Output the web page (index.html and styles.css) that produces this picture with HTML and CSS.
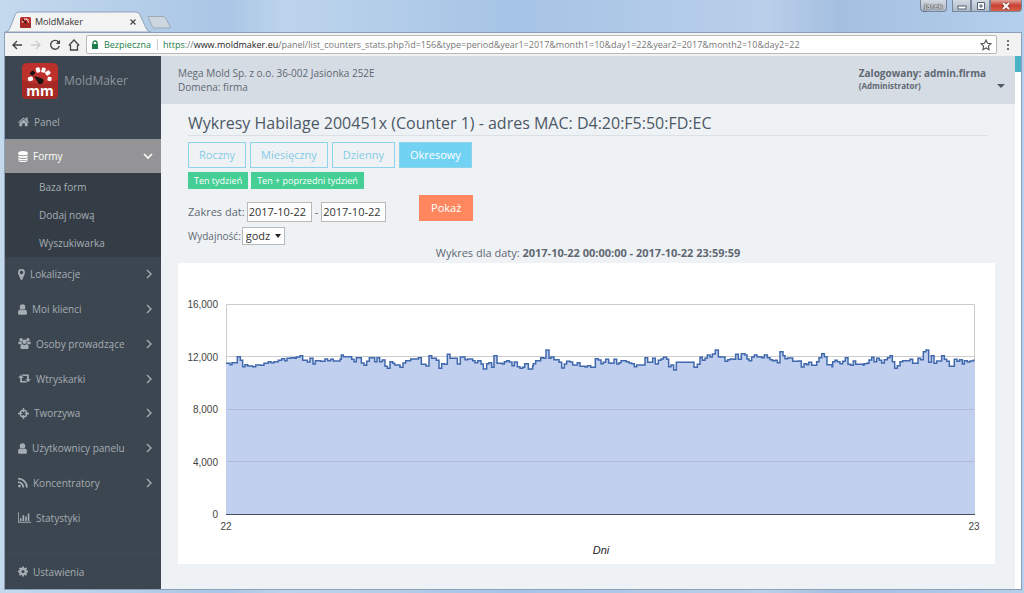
FILE: index.html
```html
<!DOCTYPE html>
<html lang="pl">
<head>
<meta charset="utf-8">
<title>MoldMaker</title>
<link rel="stylesheet" href="styles.css">
</head>
<body>
<svg class="sprite" aria-hidden="true">
  <symbol id="logo" viewBox="0 0 36 36">
    <rect width="36" height="36" rx="5" fill="#bd302b"/>
    <path d="M0 17Q18 24 36 17V31a5 5 0 0 1-5 5H5a5 5 0 0 1-5-5z" fill="#a72925"/>
    <g fill="#fff"><rect x="6" y="14" width="5" height="4" rx="1" transform="rotate(-15 8 16)"/><rect x="14" y="4.500" width="4" height="5" rx="1" transform="rotate(-15 16 7)"/><rect x="19.500" y="4.500" width="4" height="5" rx="1" transform="rotate(15 21 7)"/><rect x="24" y="8" width="5" height="4" rx="1" transform="rotate(-35 26 11)"/><rect x="25.500" y="14" width="4" height="4" rx="1" transform="rotate(10 28 16)"/></g>
    <rect x="8" y="8.500" width="4.500" height="4" rx="1" fill="#181414" transform="rotate(-50 10 10)"/>
    <path d="M12 13l7 2q3 1 2.500 4-2 3-5 1.500z" fill="#181414"/>
  </symbol>
  <symbol id="home" viewBox="0 0 16 14"><path d="M8 1L0 8l1 1 7-6 7 6 1-1-2-2V1h-3v3zM8 4L2 9v5h4v-4h4v4h4V9z"/></symbol>
  <symbol id="database" viewBox="0 0 14 16"><path d="M0 3c0-4 14-4 14 0v1c0 3-14 3-14 0zM0 6c3 2 11 2 14 0v2c0 3-14 3-14 0zM0 10c3 2 11 2 14 0v2c-1 2-13 2-14 0zM0 13.500c3 1.500 11 1.500 14 0 0 3.500-14 3.500-14 0z"/></symbol>
  <symbol id="pin" viewBox="0 0 10 16"><path fill-rule="evenodd" d="M5 0a5 5 0 0 1 5 5c0 2-1 3-1 4l-3 6.500q-1 1-2 0L1 9C1 8 0 7 0 5a5 5 0 0 1 5-5zm0 2.500a2.500 2.500 0 1 0 0 5 2.500 2.500 0 0 0 0-5z"/></symbol>
  <symbol id="user" viewBox="0 0 12 14"><circle cx="6" cy="3.700" r="3.700"/><path d="M3 7q3 2 6 0 3 0 3 5 0 2-2 2H2q-2 0-2-2 0-5 3-5z"/></symbol>
  <symbol id="users" viewBox="0 0 18 16"><circle cx="4" cy="2.500" r="2.500"/><circle cx="14" cy="2.500" r="2.500"/><circle cx="9" cy="5.500" r="3.300"/><path d="M1 5q2 1 4 0-1 3 1 4h5H1Q0 9 0 8 0 5 1 5zM17 5q-2 1-4 0 1 3-1 4h5q1 0 1-1 0-3-1-3zM6 9q3 2 6 0 3 0 3 5 0 2-2 2H5q-2 0-2-2 0-5 3-5z"/></symbol>
  <symbol id="retweet" viewBox="0 0 18 12"><path d="M4 1l4 4H5.500v4.500H11l2 2H3V5H0zM5 .5h10V7h3l-4 4-4-4h2.500V2.500H7z"/></symbol>
  <symbol id="target" viewBox="0 0 16 16"><path fill-rule="evenodd" d="M7 0h2v2.100A6 6 0 0 1 13.900 7H16v2h-2.100A6 6 0 0 1 9 13.900V16H7v-2.100A6 6 0 0 1 2.100 9H0V7h2.100A6 6 0 0 1 7 2.100zm0 4.200A4 4 0 0 0 4.200 7H6v2H4.200A4 4 0 0 0 7 11.800V10h2v1.800A4 4 0 0 0 11.800 9H10V7h1.800A4 4 0 0 0 9 4.200V6H7z"/></symbol>
  <symbol id="rss" viewBox="0 0 14 14"><circle cx="2" cy="12" r="2"/><path d="M0 6.500a7.500 7.500 0 0 1 7.500 7.500M0 1.500a12.500 12.500 0 0 1 12.500 12.500" fill="none" stroke="currentColor" stroke-width="2.500"/></symbol>
  <symbol id="chart" viewBox="0 0 20 16"><path d="M0 0h1.300v14.500H20V16H0zM3 9h2.500v4.500H3zM7 4.500h2.500v9H7zM11 6.500h2.500v7H11zM15 2h2.500v11.500H15z"/></symbol>
  <symbol id="cog" viewBox="0 0 16 16"><path d="M8 0v16M0 8h16M2.300 2.300l11.400 11.400M13.700 2.300L2.300 13.700" stroke="currentColor" stroke-width="3"/><circle cx="8" cy="8" r="4.300" fill="none" stroke="currentColor" stroke-width="3.500"/><circle cx="8" cy="8" r="2.400" fill="#3c4650"/></symbol>
  <symbol id="right" viewBox="0 0 6 10"><path d="M1 1l4 4-4 4" fill="none" stroke="currentColor" stroke-width="1.400"/></symbol>
  <symbol id="down" viewBox="0 0 10 6"><path d="M1 1l4 4 4-4" fill="none" stroke="currentColor" stroke-width="1.600"/></symbol>
</svg>

<header class="titlebar">
  <svg class="tab-shape" viewBox="0 0 170 21" aria-hidden="true">
    <path d="M0 21Q3 21 5 17L10 4Q11 1 14 1H131Q134 1 135 4L141 17Q143 21 146 21z" fill="#f3f3f4" stroke="#8fa3bb"/>
    <path d="M143 5.500h15q2 0 3 2l4 8q1 1.500-1 1.500h-14q-2 0-3-2z" fill="#cdd5de" stroke="#9caab9"/>
  </svg>
  <div class="tab"><svg class="favicon"><use href="#logo"/></svg><span>MoldMaker</span><button class="tab-close" aria-label="Zamknij kartę"><svg viewBox="0 0 6 6"><path d="M.5.5l5 5m0-5l-5 5" stroke="#444" stroke-width="1.100"/></svg></button></div>
  <div class="window-controls">
    <button class="profile">Jarek</button>
    <button class="wc" aria-label="Minimalizuj"><svg viewBox="0 0 12 8"><rect x="2" y="4" width="8" height="3" fill="#fff" stroke="#566275"/></svg></button><button class="wc" aria-label="Maksymalizuj"><svg viewBox="0 0 12 8"><path d="M2.500.5h7v7h-7zM5 3h2v2H5z" fill="#fff" stroke="#566275"/></svg></button><button class="wc wc-close" aria-label="Zamknij"><svg viewBox="0 0 12 8"><path d="M3 1l6 6m0-6L3 7" stroke="#70302a" stroke-width="3"/><path d="M3 1l6 6m0-6L3 7" stroke="#fff" stroke-width="1.800"/></svg></button>
  </div>
</header>

<div class="window">
  <div class="toolbar">
    <button class="tool" aria-label="Wstecz"><svg viewBox="0 0 12 12"><path d="M11 6H2m4-4L2 6l4 4" fill="none" stroke="#444" stroke-width="1.400"/></svg></button>
    <button class="tool" aria-label="Dalej" disabled><svg viewBox="0 0 12 12"><path d="M1 6h9M6 2l4 4-4 4" fill="none" stroke="#ccc" stroke-width="1.400"/></svg></button>
    <button class="tool" aria-label="Odśwież"><svg viewBox="0 0 12 12"><path d="M9.500 3A4.400 4.400 0 1 0 10.300 7" fill="none" stroke="#444" stroke-width="1.400"/><path d="M11 .8V5H6.800z" fill="#444"/></svg></button>
    <button class="tool" aria-label="Strona główna"><svg viewBox="0 0 12 12"><path d="M.8 6.500L6 1l5.200 5.500M2.500 6v5h7V6" fill="none" stroke="#444" stroke-width="1.300"/></svg></button>
    <div class="omnibox">
      <svg class="lock" viewBox="0 0 8 10"><path d="M2 5V3a2 2 0 0 1 4 0v2" fill="none" stroke="#188048" stroke-width="1.300"/><rect x="1" y="4" width="6" height="5" fill="#188048"/></svg>
      <span class="secure">Bezpieczna</span>
      <span class="url"><span class="scheme">https</span>://<span class="host">www.moldmaker.eu</span>/panel/list_counters_stats.php?id=156&amp;type=period&amp;year1=2017&amp;month1=10&amp;day1=22&amp;year2=2017&amp;month2=10&amp;day2=22</span>
      <svg class="star" viewBox="0 0 12 12"><path d="M6 1l1.500 3.300 3.500.4-2.600 2.400.7 3.600L6 8.900l-3.100 1.800.7-3.600L1 4.700l3.500-.4z" fill="none" stroke="#555" stroke-width="1.100"/></svg>
    </div>
    <button class="more" aria-label="Menu"><svg viewBox="0 0 4 12"><circle cx="2" cy="2" r="1.100"/><circle cx="2" cy="6" r="1.100"/><circle cx="2" cy="10" r="1.100"/></svg></button>
  </div>

  <div class="app">
    <aside class="sidebar">
      <a class="brand" href="#"><span class="brand-mark"><svg><use href="#logo"/></svg><span class="mm">mm</span></span>MoldMaker</a>
      <a class="item" href="#"><svg class="w11"><use href="#home"/></svg>Panel</a>
      <a class="item active" href="#"><svg class="w10"><use href="#database"/></svg>Formy<svg class="arrow-down"><use href="#down"/></svg></a>
      <div class="submenu"><a href="#">Baza form</a><a href="#">Dodaj nową</a><a href="#">Wyszukiwarka</a></div>
      <nav class="menu">
        <a class="item" href="#"><svg class="w7"><use href="#pin"/></svg>Lokalizacje<svg class="arrow"><use href="#right"/></svg></a>
        <a class="item" href="#"><svg class="w9"><use href="#user"/></svg>Moi klienci<svg class="arrow"><use href="#right"/></svg></a>
        <a class="item" href="#"><svg class="w13"><use href="#users"/></svg>Osoby prowadzące<svg class="arrow"><use href="#right"/></svg></a>
        <a class="item" href="#"><svg class="w13"><use href="#retweet"/></svg>Wtryskarki<svg class="arrow"><use href="#right"/></svg></a>
        <a class="item" href="#"><svg class="w11"><use href="#target"/></svg>Tworzywa<svg class="arrow"><use href="#right"/></svg></a>
        <a class="item" href="#"><svg class="w9"><use href="#user"/></svg>Użytkownicy panelu<svg class="arrow"><use href="#right"/></svg></a>
        <a class="item" href="#"><svg class="w10"><use href="#rss"/></svg>Koncentratory<svg class="arrow"><use href="#right"/></svg></a>
        <a class="item" href="#"><svg class="w13"><use href="#chart"/></svg>Statystyki</a>
      </nav>
      <a class="item settings" href="#"><svg class="w10"><use href="#cog"/></svg>Ustawienia</a>
    </aside>

    <main class="main">
      <div class="topbar">
        <div>Mega Mold Sp. z o.o. 36-002 Jasionka 252E<br>Domena: firma</div>
        <button class="account"><span>Zalogowany: admin.firma<small>(Administrator)</small></span><i class="caret"></i></button>
      </div>
      <div class="content">
        <section class="controls">
          <h1>Wykresy Habilage 200451x (Counter 1) - adres MAC: D4:20:F5:50:FD:EC</h1>
          <div class="periods"><button>Roczny</button><button>Miesięczny</button><button>Dzienny</button><button class="selected">Okresowy</button></div>
          <div class="quick"><button>Ten tydzień</button><button>Ten + poprzedni tydzień</button></div>
          <form class="range">
            <label for="from">Zakres dat:</label><input id="from" value="2017-10-22"><span>-</span><input aria-label="Data końcowa" value="2017-10-22"><button type="button">Pokaż</button>
          </form>
          <div class="unit"><label for="unit">Wydajność:</label><span class="select"><select id="unit"><option>godz</option></select></span></div>
        </section>
        <p class="caption">Wykres dla daty: <b>2017-10-22 00:00:00 - 2017-10-22 23:59:59</b></p>
        <div class="panel">
          <svg class="plot" viewBox="178 263 817 301" role="img" aria-label="Wykres wydajności">
            <path d="M226.500 304.500H974.500V514.500H226.500z" fill="#fff" stroke="#ccc"/>
            <path d="M226 356.500H975M226 409.500H975M226 461.500H975" stroke="#ccc"/>
            <g transform="translate(220 335) scale(.33333)"><path id="area" fill="#c2d0ef"/></g>
            <path d="M227 409.500H974M227 461.500H974" stroke="#b0bbd2"/>
            <g transform="translate(220 335) scale(.33333)"><path id="line" fill="none" stroke="#4068ad" stroke-width="4.500"/></g>
            <path d="M226 514.500H975" stroke="#4a4f60"/>
            <g class="ticks" text-anchor="end"><text x="218" y="308">16,000</text><text x="218" y="361">12,000</text><text x="218" y="413">8,000</text><text x="218" y="466">4,000</text><text x="218" y="518">0</text></g>
            <g class="ticks" text-anchor="middle"><text x="226" y="530">22</text><text x="974" y="530">23</text><text class="axis" x="601" y="554">Dni</text></g>
          </svg>
        </div>
      </div>
    </main>
    <div class="scroll"><div class="thumb"></div></div>
  </div>
</div>
<script src="chart.js"></script>
</body>
</html>
```
FILE: styles.css
```css
* { box-sizing: border-box; }
body { margin: 0; min-height: 100vh; display: flex; flex-direction: column; font: 10px/14px "Open Sans", "Noto Sans", sans-serif; color: #5f6873; background: linear-gradient(90deg, #c5d9ed 0, #a9c6e6 22%, #bdd4ec 28%, #a6c4e6 50%, #b9cfea 75%, #a4bfe0 82%, #b4d0ed 100%); }
button, input, select { font: inherit; color: inherit; margin: 0; }
button { border: 0; background: none; padding: 0; }
a { color: inherit; text-decoration: none; }
svg { display: block; fill: currentColor; flex: none; }
.sprite { position: absolute; width: 0; height: 0; }

.titlebar { height: 32px; display: flex; justify-content: space-between; position: relative; }
.tab-shape { position: absolute; left: 5px; top: 11px; width: 170px; height: 21px; }
.tab { position: relative; display: flex; align-items: center; width: 137px; height: 20px; margin: 12px 0 0 20px; font-size: 9px; color: #333; }
.favicon { width: 11px; height: 11px; margin-right: 4px; }
.tab span { flex: 1; }
.tab-close { margin-right: 21px; }
.tab-close svg { width: 6px; height: 6px; }
.window-controls { display: flex; height: 12px; margin-right: 2px; }
.profile, .wc { height: 12px; border: 1px solid #77869a; border-top: 0; background: linear-gradient(#d3dae3, #aebacb); }
.profile { width: 27px; margin-right: 5px; border-radius: 0 0 4px 4px; font-size: 8px; line-height: 11px; color: #fff; text-shadow: 0 0 1px #333, 0 0 1px #333, 0 0 2px #333; }
.wc { width: 19px; display: grid; place-items: center; }
.wc svg { width: 12px; height: 8px; }
.wc-close { width: 32px; border-radius: 0 0 4px 0; background: linear-gradient(#e0a097, #c84031 50%, #d9624b); }

.window { flex: 1; display: flex; flex-direction: column; margin: 0 2px 3px 4px; border: 1px solid #8ca0ba; background: #f2f2f2; position: relative; }
.toolbar { display: flex; align-items: center; height: 23px; padding: 0 11px 0 2px; }
.tool { width: 19px; display: grid; place-items: center; }
.tool svg { width: 12px; height: 12px; }
.omnibox { flex: 1; display: flex; align-items: center; height: 19px; margin-left: 3px; background: #fff; border: 1px solid #b8b8b8; border-radius: 2px; font-size: 9px; padding: 0 4px; }
.lock { width: 8px; height: 10px; margin-right: 5px; }
.secure { color: #188048; padding-right: 6px; border-right: 1px solid #ccc; line-height: 11px; }
.url { flex: 1; padding-left: 5px; color: #777; white-space: nowrap; }
.scheme { color: #188048; }
.host { color: #222; }
.star { width: 12px; height: 12px; }
.more { margin-left: 9px; color: #555; }
.more svg { width: 4px; height: 12px; }

.app { flex: 1; display: flex; }
.sidebar { width: 156px; display: flex; flex-direction: column; background: #3c4650; color: #a6adb3; }
.brand { display: flex; align-items: center; gap: 6px; height: 48px; padding: 2px 0 0 17px; font-size: 12px; color: #8d959d; }
.brand-mark { position: relative; width: 36px; height: 36px; }
.brand-mark svg { width: 36px; height: 36px; }
.mm { position: absolute; left: 0; right: 0; bottom: 1px; text-align: center; font: bold 14px/14px "Open Sans", sans-serif; color: #fff; }
.item { display: flex; align-items: center; gap: 5px; height: 35px; padding: 0 8px 0 13px; }
.menu .item { height: auto; }
.active { height: 34px; background: #949496; color: #fff; font-weight: 500; }
.w7, .w9, .w10, .w11, .w13 { height: 11px; }
.w7 { width: 7px; } .w9 { width: 9px; } .w10 { width: 10px; } .w11 { width: 11px; } .w13 { width: 13px; }
.arrow { width: 6px; height: 10px; margin: 0 1px 0 auto; }
.arrow-down { width: 10px; height: 6px; margin-left: auto; }
.submenu { background: #343d46; }
.submenu a { display: block; padding: 7px 0 7px 34px; }
.menu { flex: 1; display: grid; grid-auto-rows: 1fr; margin-bottom: 18px; }
.settings { height: 36px; border-top: 1px solid #414b55; }

.main { flex: 1; display: flex; flex-direction: column; background: #eff2f5; min-width: 0; }
.topbar { height: 48px; display: flex; justify-content: space-between; padding: 10px 10px 0 17px; background: #d6dce4; }
.account { display: flex; align-items: flex-start; gap: 11px; text-align: left; font-weight: bold; }
.account small { display: block; font-size: 8px; line-height: 12px; }
.caret { margin-top: 18px; border: 4px solid transparent; border-bottom: 0; border-top-color: #4f5964; }
.content { flex: 1; display: flex; flex-direction: column; padding: 9px 20px 25px 17px; }
.controls { padding: 0 8px 0 10px; }
h1 { margin: 0 0 6px; padding-bottom: 2px; border-bottom: 1px solid #dbe0e5; font-size: 16px; line-height: 20px; font-weight: 500; color: #4c5866; }
.periods, .quick { display: flex; gap: 3px; }
.periods { gap: 4px; }
.periods button { height: 26px; padding: 0 10px; border: 1px solid #8dd3ec; color: #86cbe6; font-size: 11px; }
.periods .selected { background: #72d2f3; color: #fff; }
.quick { margin: 4px 0 6px; }
.quick button { height: 17px; padding: 0 6px; background: #45cf95; color: #fff; font-size: 9px; font-weight: 500; line-height: 17px; }
.range { display: flex; align-items: center; height: 26px; font-size: 11px; }
.range label { margin: 7px 2px 0 0; }
.range span { margin: 7px 3px 0; }
.range input { width: 65px; height: 20px; margin-top: 7px; border: 1px solid #b9b9b9; padding: 0 1px; background: #fff; color: #333; }
.range button { width: 54px; height: 26px; margin-left: 33px; background: #ff875f; color: #fff; }
.unit { display: flex; align-items: center; margin-top: 6px; }
.select { position: relative; margin-left: 1px; }
.select::after { content: ""; position: absolute; right: 4px; top: 7px; border: 3px solid transparent; border-top: 4px solid #222; border-bottom: 0; pointer-events: none; }
select { display: block; width: 43px; height: 18px; padding: 0 3px; appearance: none; border: 1px solid #b9b9b9; border-radius: 0; background: #fff; font-size: 11px; color: #333; }
.caption { margin: 1px 0 3px; text-align: center; font-size: 11px; line-height: 14px; padding-left: 3px; }
.panel { flex: 1; background: #fff; }
.plot { width: 100%; height: auto; }
.ticks { font: 10px "Liberation Sans", Arial, sans-serif; fill: #444; }
.axis { font-size: 11px; font-style: italic; fill: #222; }
.scroll { width: 6px; background: #fff; }
.thumb { height: 16px; background: #4bb1c5; }
```
FILE: chart.js
```js
// Each pair is the position of a step and its level; three units per pixel.
const segments = [
  [0, "18 85 30 89 36 83 52 65 61 76 68 95 75 89 83 93 98 95 107 90 122 91 132 85 145 80 153 83 162 80 175 76 185 71 194 77 201 70 214 68 224 70 229 66 240 62 248 76 262 81 270 70 279 87 286 77 302 79 315 72 323 77 332 73 340 78 360 73 364 60 370 65 395 73 402 80 409 68 424 84 432 91 440 79 448 68 464 80 471 68 479 80 487 75 495 94 502 100 510 80 518 85 524 90 540 97 549 84 557 77 572 72 595 68 604 88 618 93 627 62 635 70 649 76 657 100 665 86 673 88 682 58 690 70 712 87 721 66 735 74 743 72"],
  [750, "0 72 8 77 15 83 23 77 33 87 40 102 50 86 57 83 65 97 72 62 81 85 97 87 103 80 110 77 118 81 126 92 133 81 142 95 150 100 158 97 164 86 175 102 188 93 190 86 197 77 212 68 220 70 228 45 237 70 243 66 252 74 267 82 275 99 283 87 290 79 300 81 308 90 322 83 330 94 345 96 352 92 362 97 376 71 385 75 393 86 400 82 407 73 416 84 423 85 432 73 440 87 447 83 453 77 469 80 477 84 485 86 493 95 500 90 525 68 533 82 548 70 556 87 565 76 573 72 580 67 590 73 596 95 603 90 611 105 619 82 672 97 682 88 690 67 697 76 705 70 712 60 720 66 727 57 736 45 745 65"],
  [1500, "0 66 15 79 23 74 31 72 40 73 47 58 55 73 64 56 75 60 81 72 87 77 95 66 103 60 111 65 125 68 133 60 142 68 150 74 158 77 166 76 172 83 180 50 189 62 195 71 203 69 218 79 235 78 244 96 252 86 260 89 266 82 275 91 290 80 297 68 305 56 313 65 321 89 336 95 338 80 345 76 352 80 360 86 368 79 376 68 384 88 392 91 400 78 407 88 430 91 432 86 440 85 447 75 455 67 462 80 470 70 478 76 485 84 493 74 502 68 510 62 517 80 524 100 532 92 540 80 548 77 570 73 578 85 594 70 602 74 610 50 618 45 626 82 634 62 642 85 650 78 665 62 673 73 680 79 688 94 703 73 711 79 719 74 727 87 733 77 742 81 750 78 760 76"]
];
let path = "";
for (const [offset, data] of segments) {
  const values = data.split(" ").map(Number);
  for (let i = 0; i < values.length; i += 2) {
    path += path ? `H${values[i] + offset}V${values[i + 1]}` : `M${values[i]} ${values[i + 1]}`;
  }
}
path += "H2264";
document.getElementById("line").setAttribute("d", path);
document.getElementById("area").setAttribute("d", path + "V538H18z");
```
